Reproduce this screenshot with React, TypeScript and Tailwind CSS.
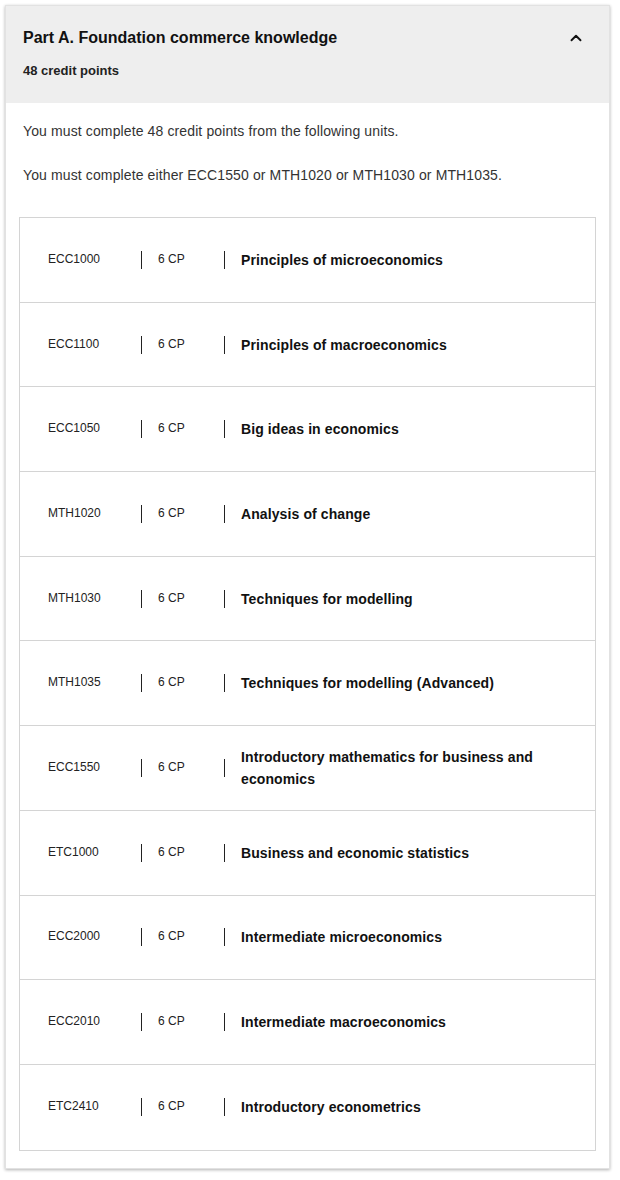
import React from "react";
import { ChevronUp } from "lucide-react";

const units = [
  { code: "ECC1000", cp: "6 CP", title: "Principles of microeconomics" },
  { code: "ECC1100", cp: "6 CP", title: "Principles of macroeconomics" },
  { code: "ECC1050", cp: "6 CP", title: "Big ideas in economics" },
  { code: "MTH1020", cp: "6 CP", title: "Analysis of change" },
  { code: "MTH1030", cp: "6 CP", title: "Techniques for modelling" },
  { code: "MTH1035", cp: "6 CP", title: "Techniques for modelling (Advanced)" },
  { code: "ECC1550", cp: "6 CP", title: "Introductory mathematics for business and economics" },
  { code: "ETC1000", cp: "6 CP", title: "Business and economic statistics" },
  { code: "ECC2000", cp: "6 CP", title: "Intermediate microeconomics" },
  { code: "ECC2010", cp: "6 CP", title: "Intermediate macroeconomics" },
  { code: "ETC2410", cp: "6 CP", title: "Introductory econometrics" },
];

function UnitRow({ code, cp, title }: { code: string; cp: string; title: string }) {
  return (
    <div className="flex items-center h-[84.7px] border-b border-[#d4d4d4] last:border-b-0 pl-[28px] pr-[40px]">
      <span className="w-[93px] shrink-0 text-[12px] text-[#222] -mt-[2px]">{code}</span>
      <span className="w-px h-[18px] bg-[#222] shrink-0" />
      <span className="w-[82px] shrink-0 pl-[16px] text-[12px] text-[#222] -mt-[2px]">{cp}</span>
      <span className="w-px h-[18px] bg-[#222] shrink-0" />
      <span className="pl-[16px] text-[14px] font-bold leading-[22px] tracking-[0.1px] text-[#111]">{title}</span>
    </div>
  );
}

export default function App() {
  return (
    <div className="bg-white min-h-[1180px] pt-[5px] pl-[5px]" style={{ fontFamily: '"Liberation Sans", Arial, sans-serif' }}>
      <div className="w-[605px] bg-white border border-[#e2e2e2] shadow-[0_1px_3px_rgba(0,0,0,0.3)]">
        <div className="bg-[#eeeeee] h-[97px] px-[17px] pt-[22px] relative">
          <h2 className="text-[16px] font-bold text-[#111] leading-[20px]">Part A. Foundation commerce knowledge</h2>
          <p className="mt-[13px] text-[13px] font-bold text-[#222]">48 credit points</p>
          <ChevronUp className="absolute right-[24px] top-[23px] text-[#111]" size={18} strokeWidth={2.5} />
        </div>
        <div className="px-[13px] pb-[17px]">
          <p className="mt-[18px] ml-[4px] text-[14px] tracking-[0.12px] text-[#333]">You must complete 48 credit points from the following units.</p>
          <p className="mt-[23px] ml-[4px] text-[14px] tracking-[0.12px] text-[#333]">You must complete either ECC1550 or MTH1020 or MTH1030 or MTH1035.</p>
          <div className="mt-[31px] border border-[#d4d4d4]">
            {units.map((u) => (
              <UnitRow key={u.code} {...u} />
            ))}
          </div>
        </div>
      </div>
    </div>
  );
}
